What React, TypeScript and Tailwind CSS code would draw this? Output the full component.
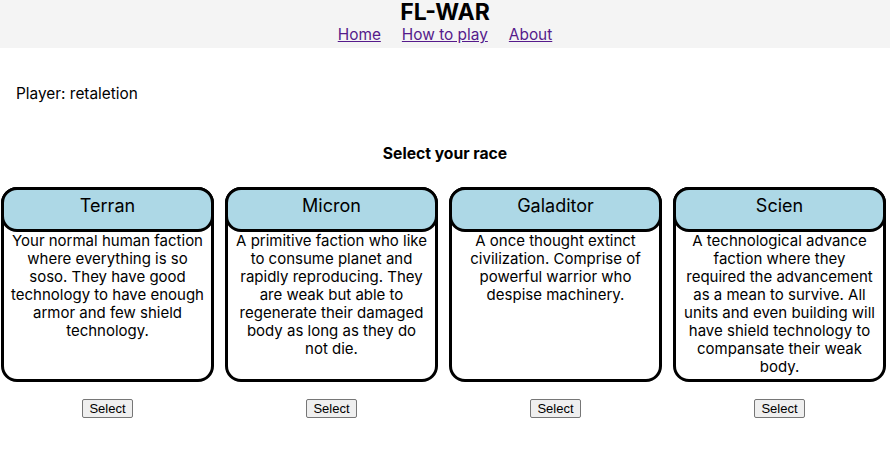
import React from "react";

interface Race {
  name: string;
  desc: string[];
}

// lines kept as they wrap in the design
const RACES: Race[] = [
  {
    name: "Terran",
    desc: [
      "Your normal human faction",
      "where everything is so",
      "soso. They have good",
      "technology to have enough",
      "armor and few shield",
      "technology.",
    ],
  },
  {
    name: "Micron",
    desc: [
      "A primitive faction who like",
      "to consume planet and",
      "rapidly reproducing. They",
      "are weak but able to",
      "regenerate their damaged",
      "body as long as they do",
      "not die.",
    ],
  },
  {
    name: "Galaditor",
    desc: [
      "A once thought extinct",
      "civilization. Comprise of",
      "powerful warrior who",
      "despise machinery.",
    ],
  },
  {
    name: "Scien",
    desc: [
      "A technological advance",
      "faction where they",
      "required the advancement",
      "as a mean to survive. All",
      "units and even building will",
      "have shield technology to",
      "compansate their weak",
      "body.",
    ],
  },
];

export default function App() {
  return (
    <div className="min-h-[450px] bg-white text-black font-['Inter',sans-serif]">
      {/* Header */}
      <header className="h-[48px] bg-[#f4f4f4] flex flex-col items-center">
        <h1 className="text-[23px] font-bold leading-[25px]">FL-WAR</h1>
        <nav className="flex gap-[21px] text-[15.4px] leading-[18px] mt-[1px]">
          <a href="#" className="underline text-[#551a8b]">Home</a>
          <a href="#" className="underline text-[#551a8b]">How to play</a>
          <a href="#" className="underline text-[#551a8b]">About</a>
        </nav>
      </header>

      <p className="pl-[16px] mt-[37px] text-[15.4px] leading-[18px]">Player: retaletion</p>

      <h2 className="text-center font-bold text-[15.7px] leading-[18px] mt-[42px]">Select your race</h2>

      {/* Race cards */}
      <div className="flex gap-[11px] pl-[1px] mt-[24px]">
        {RACES.map((r) => (
          <div key={r.name} className="w-[213px] flex flex-col items-center">
            <div className="w-full h-[195px] border-[3px] border-black rounded-[16px] flex flex-col">
              <div className="-mx-[3px] -mt-[3px] h-[45px] border-[3px] border-black rounded-[16px] bg-[#add8e6] flex justify-center pt-[4px] text-[18px] leading-[24px]">
                {r.name}
              </div>
              <p className="text-center text-[15px] leading-[18px] whitespace-nowrap">
                {r.desc.map((line) => (
                  <span key={line} className="block">{line}</span>
                ))}
              </p>
            </div>
            <button className="mt-[17px] h-[19px] px-[6px] text-[13px] leading-[15px] bg-[#efefef] border border-[#767676] rounded-[2px] font-['Liberation_Sans',sans-serif]">
              Select
            </button>
          </div>
        ))}
      </div>
    </div>
  );
}
